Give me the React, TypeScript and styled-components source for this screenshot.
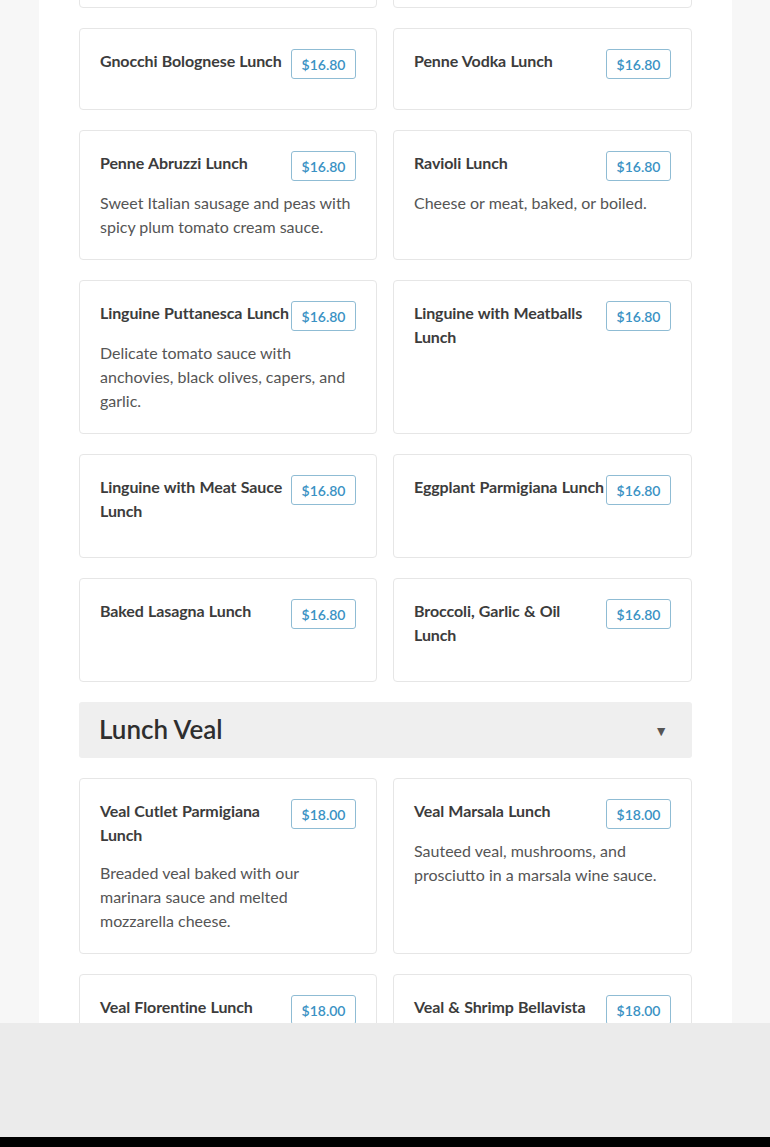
import { createGlobalStyle, styled } from "styled-components";

const GlobalStyle = createGlobalStyle`
    html, body {
        margin: 0;
        padding: 0;
        background-color: #f7f7f7;
        font-family: Lato, "Liberation Sans", sans-serif;
        overflow: hidden;
    }
`;

const Page = styled.div`
    width: 693px;
    margin: 0 38px 0 39px;
    background-color: #ffffff;
    padding: 0 40px 200px 40px;
    box-sizing: border-box;
    min-height: 1147px;
`;

const Scroller = styled.div`
    margin-top: -74px;
    display: flex;
    flex-direction: column;
    gap: 20px;
`;

const Grid = styled.div`
    display: grid;
    grid-template-columns: 298px 299px;
    gap: 20px 16px;
`;

const Card = styled.div`
    border: 1px solid #e6e6e6;
    border-radius: 4px;
    padding: 20px;
    background: #fff;
`;

const CardHead = styled.div`
    display: flex;
    align-items: flex-start;
`;

const Title = styled.h3`
    flex: 1;
    margin: 0 1px 0 0;
    padding-bottom: 14px;
    font-size: 16px;
    line-height: 24px;
    font-weight: 700;
    letter-spacing: -0.1px;
    word-spacing: 0.5px;
    color: #3c3c3c;
`;

const Price = styled.span`
    flex: none;
    margin: 0 0 10px 0;
    width: 63px;
    height: 28px;
    border: 1px solid #8fbcd4;
    border-radius: 3px;
    display: flex;
    align-items: center;
    justify-content: center;
    font-size: 14px;
    color: #3a92c4;
    font-weight: 600;
`;

const Desc = styled.p`
    margin: 0;
    font-size: 16px;
    line-height: 24px;
    color: #555555;
`;

const Section = styled.div`
    display: flex;
    align-items: center;
    justify-content: space-between;
    height: 56px;
    padding: 0 24px 2px 20px;
    box-sizing: border-box;
    background: #efefef;
    border-radius: 3px;
`;

const SectionTitle = styled.h2`
    margin: 0;
    font-size: 26px;
    font-weight: 600;
    color: #2e2e2e;
`;

const Caret = styled.span`
    font-size: 14px;
    color: #555;
    padding-top: 2px;
`;

const Overlay = styled.div`
    position: fixed;
    left: 0;
    right: 0;
    bottom: 0;
    height: 124px;
    display: flex;
    flex-direction: column;
`;

const OverlayGray = styled.div`
    flex: 1;
    background: #ebebeb;
`;

const OverlayBlack = styled.div`
    height: 10px;
    background: #000;
`;

type Item = { name: string; price: string; desc?: string };

const pasta: Item[] = [
    { name: "Cavatelli Broccoli Lunch", price: "$16.80" },
    { name: "Rigatoni Lunch", price: "$16.80" },
    { name: "Gnocchi Bolognese Lunch", price: "$16.80" },
    { name: "Penne Vodka Lunch", price: "$16.80" },
    { name: "Penne Abruzzi Lunch", price: "$16.80", desc: "Sweet Italian sausage and peas with spicy plum tomato cream sauce." },
    { name: "Ravioli Lunch", price: "$16.80", desc: "Cheese or meat, baked, or boiled." },
    { name: "Linguine Puttanesca Lunch", price: "$16.80", desc: "Delicate tomato sauce with anchovies, black olives, capers, and garlic." },
    { name: "Linguine with Meatballs Lunch", price: "$16.80" },
    { name: "Linguine with Meat Sauce Lunch", price: "$16.80" },
    { name: "Eggplant Parmigiana Lunch", price: "$16.80" },
    { name: "Baked Lasagna Lunch", price: "$16.80" },
    { name: "Broccoli, Garlic & Oil Lunch", price: "$16.80" },
];

const veal: Item[] = [
    { name: "Veal Cutlet Parmigiana Lunch", price: "$18.00", desc: "Breaded veal baked with our marinara sauce and melted mozzarella cheese." },
    { name: "Veal Marsala Lunch", price: "$18.00", desc: "Sauteed veal, mushrooms, and prosciutto in a marsala wine sauce." },
    { name: "Veal Florentine Lunch", price: "$18.00", desc: "Veal with spinach and mozzarella in a light brown sauce." },
    { name: "Veal & Shrimp Bellavista", price: "$18.00", desc: "Veal and shrimp with mushrooms in a white wine sauce." },
];

function MenuCard({ item }: { item: Item }) {
    return (
        <Card>
            <CardHead>
                <Title>{item.name}</Title>
                <Price>{item.price}</Price>
            </CardHead>
            {item.desc && <Desc>{item.desc}</Desc>}
        </Card>
    );
}

export default function App() {
    return (
        <>
            <GlobalStyle />
            <Page>
                <Scroller>
                    <Grid>
                        {pasta.map((it) => <MenuCard key={it.name} item={it} />)}
                    </Grid>
                    <Section>
                        <SectionTitle>Lunch Veal</SectionTitle>
                        <Caret>▼</Caret>
                    </Section>
                    <Grid>
                        {veal.map((it) => <MenuCard key={it.name} item={it} />)}
                    </Grid>
                </Scroller>
            </Page>
            <Overlay>
                <OverlayGray />
                <OverlayBlack />
            </Overlay>
        </>
    );
}
